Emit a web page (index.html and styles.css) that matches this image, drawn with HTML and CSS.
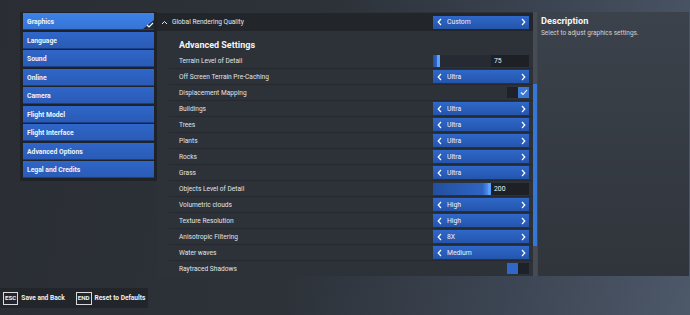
FILE: index.html
```html
<!DOCTYPE html>
<html lang="en">
<head>
    <meta charset="UTF-8">
    <title>Settings - Graphics</title>
    <link rel="stylesheet" href="styles.css">
</head>
<body>
    <div class="screen">
        <div class="top">
            <!-- Menu lateral -->
            <div class="menu">
                <div class="menu-item active">Graphics
                    <span class="corner">
                        <svg width="8" height="6" viewBox="0 0 8 6"><path d="M1 3 L3 5 L7 1" fill="none" stroke="#fff" stroke-width="1.1"/></svg>
                    </span>
                </div>
                <div class="menu-item">Language</div>
                <div class="menu-item">Sound</div>
                <div class="menu-item">Online</div>
                <div class="menu-item">Camera</div>
                <div class="menu-item">Flight Model</div>
                <div class="menu-item">Flight Interface</div>
                <div class="menu-item">Advanced Options</div>
                <div class="menu-item">Legal and Credits</div>
            </div>

            <!-- Panel principal -->
            <div class="main">
                <div class="global-row">
                    <span class="caret">
                        <svg width="7" height="5" viewBox="0 0 7 5"><path d="M1 4 L3.5 1.5 L6 4" fill="none" stroke="#e8e8e8" stroke-width="1"/></svg>
                    </span>
                    <span class="global-label">Global Rendering Quality</span>
                    <div class="select">
                        <svg class="chev" width="5" height="8" viewBox="0 0 5 8"><path d="M4 1 L1.2 4 L4 7" fill="none" stroke="#fff" stroke-width="1.2"/></svg>
                        <span class="value">Custom</span>
                        <svg class="chev" width="5" height="8" viewBox="0 0 5 8"><path d="M1 1 L3.8 4 L1 7" fill="none" stroke="#fff" stroke-width="1.2"/></svg>
                    </div>
                </div>
                <h3 class="heading">Advanced Settings</h3>
                <div id="rows"></div>
            </div>

            <div class="scrollbar"><div class="thumb"></div></div>

            <!-- Descripción -->
            <div class="desc">
                <h3>Description</h3>
                <p>Select to adjust graphics settings.</p>
            </div>
        </div>

        <div class="footer">
            <span class="key">ESC</span><span class="key-label">Save and Back</span>
            <span class="key">END</span><span class="key-label">Reset to Defaults</span>
        </div>
    </div>

    <script>
        const settings = [
            { label: 'Terrain Level of Detail', type: 'slider', value: 75, fill: 12 },
            { label: 'Off Screen Terrain Pre-Caching', type: 'select', value: 'Ultra' },
            { label: 'Displacement Mapping', type: 'toggle', on: true },
            { label: 'Buildings', type: 'select', value: 'Ultra' },
            { label: 'Trees', type: 'select', value: 'Ultra' },
            { label: 'Plants', type: 'select', value: 'Ultra' },
            { label: 'Rocks', type: 'select', value: 'Ultra' },
            { label: 'Grass', type: 'select', value: 'Ultra' },
            { label: 'Objects Level of Detail', type: 'slider', value: 200, fill: 100 },
            { label: 'Volumetric clouds', type: 'select', value: 'High' },
            { label: 'Texture Resolution', type: 'select', value: 'High' },
            { label: 'Anisotropic Filtering', type: 'select', value: '8X' },
            { label: 'Water waves', type: 'select', value: 'Medium' },
            { label: 'Raytraced Shadows', type: 'toggle', on: false }
        ];

        const check = '<svg width="8" height="7" viewBox="0 0 8 7"><path d="M1 3.5 L3 5.5 L7 1" fill="none" stroke="#fff" stroke-width="1.1"/></svg>';
        const left = '<svg class="chev" width="5" height="8" viewBox="0 0 5 8"><path d="M4 1 L1.2 4 L4 7" fill="none" stroke="#fff" stroke-width="1.2"/></svg>';
        const right = '<svg class="chev" width="5" height="8" viewBox="0 0 5 8"><path d="M1 1 L3.8 4 L1 7" fill="none" stroke="#fff" stroke-width="1.2"/></svg>';

        let html = '';
        settings.forEach(s => {
            let control = '';
            if (s.type === 'select') {
                control = `<div class="select">${left}<span class="value">${s.value}</span>${right}</div>`;
            } else if (s.type === 'slider') {
                control = `<div class="slider"><div class="track"><div class="fill" style="width: ${s.fill}%"></div></div><div class="num">${s.value}</div></div>`;
            } else {
                control = `<div class="toggle ${s.on ? 'on' : 'off'}"><span class="t-left"></span><span class="t-right">${s.on ? check : ''}</span></div>`;
            }
            html += `<div class="row"><span class="label">${s.label}</span>${control}</div>`;
        });
        document.getElementById('rows').innerHTML = html;
    </script>
</body>
</html>
```

FILE: styles.css
```css
body {
    margin: 0;
    padding: 0;
    font-family: Roboto, "Liberation Sans", sans-serif;
    color: #e6e8eb;
}

.screen {
    width: 690px;
    height: 315px;
    overflow: hidden;
    background: linear-gradient(100deg, #2a2e34 0%, #2d3239 45%, #3c4553 75%, #4d5869 100%);
    display: flex;
    flex-direction: column;
}

.top {
    display: flex;
    padding-top: 12px;
    height: 264px;
}

/* Menu lateral */
.menu {
    margin-left: 20px;
    width: 137px;
    height: 169px;
    padding: 1px 3px 0 3px;
    box-sizing: border-box;
    background: #1f2328;
    display: flex;
    flex-direction: column;
    gap: 1.5px;
}

.menu-item {
    position: relative;
    height: 17px;
    line-height: 18px;
    padding-left: 4px;
    font-size: 6.8px;
    font-weight: 700;
    color: #f2f4f8;
    background: linear-gradient(180deg, #2f66c8 0%, #2a5bb6 100%);
    border-bottom: 1px solid #1c3f84;
    box-sizing: border-box;
}

.menu-item.active {
    background: linear-gradient(180deg, #3d82e6 0%, #3674d6 100%);
}

.corner {
    position: absolute;
    right: 0;
    bottom: 0;
    width: 0;
    height: 0;
    border-left: 11px solid transparent;
    border-bottom: 9px solid #1f2a3d;
}

.corner svg {
    position: absolute;
    right: 0;
    top: 2px;
}

/* Panel principal */
.main {
    width: 376px;
    height: 264px;
    background: #2d3138;
    display: flex;
    flex-direction: column;
    overflow: hidden;
}

.global-row {
    display: flex;
    align-items: center;
    flex-shrink: 0;
    height: 18px;
    background: #22262b;
    padding-right: 4px;
    margin-top: 1px;
}

.caret {
    display: flex;
    width: 7px;
    margin-left: 4px;
}

.global-label {
    flex: 1;
    margin-left: 4px;
    font-size: 6.6px;
}

.heading {
    margin: 0;
    flex-shrink: 0;
    height: 22px;
    line-height: 28px;
    padding-left: 22px;
    font-size: 9px;
    font-weight: 700;
    color: #f4f5f7;
}

#rows {
    flex-shrink: 0;
}

.row {
    display: flex;
    align-items: center;
    height: 16px;
    padding-left: 22px;
    padding-right: 4px;
    margin-left: 12px;
    border-bottom: 1px solid #262a30;
    box-sizing: border-box;
}

.label {
    flex: 1;
    font-size: 6.6px;
    color: #e2e5e9;
    margin-left: -12px;
}

.select {
    width: 96px;
    height: 13px;
    display: flex;
    align-items: center;
    background: linear-gradient(180deg, #2f68c9 0%, #2455ab 100%);
    font-size: 6.8px;
    color: #f0f2f6;
    box-sizing: border-box;
    padding: 0 3px 0 4px;
}

.select .value {
    flex: 1;
    padding-left: 5px;
}

.chev {
    display: block;
}

.slider {
    width: 96px;
    height: 12px;
    display: flex;
}

.track {
    width: 58px;
    background: #262b33;
}

.fill {
    height: 100%;
    background: linear-gradient(90deg, #234f9e 0%, #2e64c2 90%, #4a8ff0 100%);
    border-right: 3px solid #5aa0ff;
    box-sizing: border-box;
}

.num {
    flex: 1;
    background: #1d2025;
    font-size: 6.8px;
    line-height: 12px;
    padding-left: 3px;
    color: #eef0f3;
}

.toggle {
    width: 22px;
    height: 11px;
    margin-left: 74px;
    display: flex;
}

.toggle span {
    width: 11px;
    height: 11px;
    display: flex;
    align-items: center;
    justify-content: center;
}

.toggle.on .t-left { background: #1d2228; }
.toggle.on .t-right { background: #3a78d8; }
.toggle.off .t-left { background: #2f68c9; }
.toggle.off .t-right { background: #1d2228; }

.scrollbar {
    width: 4px;
    height: 264px;
    background: #474c54;
}

.thumb {
    margin-top: 72px;
    height: 162px;
    background: #3677d6;
}

/* Descripción */
.desc {
    width: 151px;
    height: 264px;
    margin-left: 1px;
    background: linear-gradient(180deg, #3c424b 0%, #30353c 100%);
    padding: 3px 3px;
    box-sizing: border-box;
}

.desc h3 {
    margin: 0;
    font-size: 9.2px;
    font-weight: 700;
    color: #f4f5f7;
}

.desc p {
    margin: 3px 0 0 0;
    font-size: 6.5px;
    color: #cfd3d8;
}

.footer {
    margin-top: 12px;
    width: 148px;
    height: 20px;
    background: #22252a;
    display: flex;
    align-items: center;
    padding-left: 3px;
    box-sizing: border-box;
    white-space: nowrap;
}

.key {
    border: 1px solid #d8dadd;
    font-size: 6.2px;
    font-weight: 700;
    padding: 1px 1px;
    line-height: 9px;
    color: #f0f0f0;
}

.key-label {
    font-size: 6.6px;
    font-weight: 700;
    margin-left: 3px;
    margin-right: 11px;
    color: #eef0f3;
}
```
